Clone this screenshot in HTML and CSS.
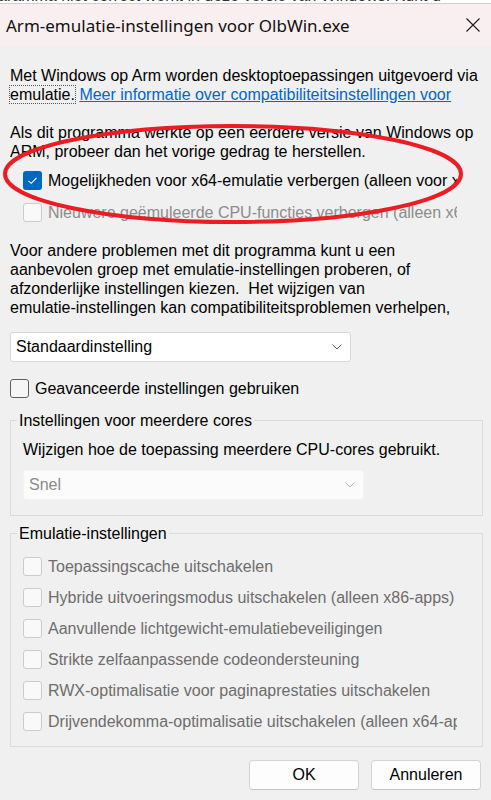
FILE: index.html
```html
<!DOCTYPE html>
<html lang="nl">
<head>
  <meta charset="UTF-8">
  <title>Arm-emulatie-instellingen voor OlbWin.exe</title>
  <link rel="stylesheet" href="styles.css">
</head>
<body>
  <div class="behind"><span>aramma niet correct werkt in deze versie van Windows. Kunt u</span></div>
  <div class="dialog">
    <div class="titlebar">
      <span class="title">Arm-emulatie-instellingen voor OlbWin.exe</span>
      <svg class="close" width="14" height="14" viewBox="0 0 14 14"><path d="M0.5 0.5 L13.5 13.5 M13.5 0.5 L0.5 13.5" stroke="#1b1b1b" stroke-width="1.1" fill="none"/></svg>
    </div>
    <div class="content">
      <p class="text intro">Met Windows op Arm worden desktoptoepassingen uitgevoerd via<br><span class="focus">emulatie.</span> <a href="#">Meer informatie over compatibiliteitsinstellingen voor</a></p>
      <p class="text">Als dit programma werkte op een eerdere versie van Windows op<br>ARM, probeer dan het vorige gedrag te herstellen.</p>
      <div class="compat">
        <div class="check">
          <span class="box checked"><svg width="19" height="19" viewBox="0 0 19 19"><path d="M5.5 9.8 L8.2 12.3 L13.5 7" stroke="#fff" stroke-width="1.1" fill="none"/></svg></span>
          <span class="label">Mogelijkheden voor x64-emulatie verbergen (alleen voor x64-apps)</span>
        </div>
        <div class="check disabled light">
          <span class="box"></span>
          <span class="label">Nieuwere geëmuleerde CPU-functies verbergen (alleen x64-apps)</span>
        </div>
      </div>
      <p class="text">Voor andere problemen met dit programma kunt u een<br>aanbevolen groep met emulatie-instellingen proberen, of<br>afzonderlijke instellingen kiezen.&nbsp; Het wijzigen van<br>emulatie-instellingen kan compatibiliteitsproblemen verhelpen,</p>
      <div class="select">
        <span>Standaardinstelling</span>
        <svg width="10" height="6" viewBox="0 0 10 6"><path d="M0.5 0.5 L5 5 L9.5 0.5" stroke="#5a5a5a" stroke-width="1" fill="none"/></svg>
      </div>
      <div class="check advanced">
        <span class="box"></span>
        <span class="label">Geavanceerde instellingen gebruiken</span>
      </div>
      <fieldset class="group cores">
        <legend>Instellingen voor meerdere cores</legend>
        <p class="text">Wijzigen hoe de toepassing meerdere CPU-cores gebruikt.</p>
        <div class="select disabled">
          <span>Snel</span>
          <svg width="10" height="6" viewBox="0 0 10 6"><path d="M0.5 0.5 L5 5 L9.5 0.5" stroke="#b5b5b5" stroke-width="1" fill="none"/></svg>
        </div>
      </fieldset>
      <fieldset class="group emulation">
        <legend>Emulatie-instellingen</legend>
        <div class="check disabled"><span class="box"></span><span class="label">Toepassingscache uitschakelen</span></div>
        <div class="check disabled"><span class="box"></span><span class="label">Hybride uitvoeringsmodus uitschakelen (alleen x86-apps)</span></div>
        <div class="check disabled"><span class="box"></span><span class="label">Aanvullende lichtgewicht-emulatiebeveiligingen</span></div>
        <div class="check disabled"><span class="box"></span><span class="label">Strikte zelfaanpassende codeondersteuning</span></div>
        <div class="check disabled"><span class="box"></span><span class="label">RWX-optimalisatie voor paginaprestaties uitschakelen</span></div>
        <div class="check disabled"><span class="box"></span><span class="label">Drijvendekomma-optimalisatie uitschakelen (alleen x64-apps)</span></div>
      </fieldset>
      <div class="buttons">
        <button>OK</button>
        <button>Annuleren</button>
      </div>
    </div>
  </div>
  <!-- red marker drawn over the screenshot -->
  <svg class="marker" width="491" height="130" viewBox="0 0 491 130">
    <ellipse cx="233" cy="52" rx="228" ry="48" fill="none" stroke="#ec1c24" stroke-width="4"/>
  </svg>
</body>
</html>
```

FILE: styles.css
```css
body { margin: 0; background: #f0f0f0; font-family: "Liberation Sans", Arial, sans-serif; font-size: 16px; color: #000; position: relative; width: 491px; height: 800px; overflow: hidden; }
.behind { height: 3px; overflow: hidden; background: #fff; border-bottom: 1px solid #cfcfcf; white-space: nowrap; }
.behind span { display: block; margin-top: -12px; margin-left: -2px; line-height: 16px; color: #333; }
.dialog { background: #f0f0f0; }
.titlebar { height: 42px; background: #f9eff1; display: flex; align-items: center; justify-content: space-between; padding: 0 11px 0 6px; }
.title { font-family: "Noto Sans", sans-serif; font-size: 17px; color: #111; }
.close { display: block; }
.content { padding: 20px 8px 12px 10px; }
.text { margin: 0 0 19px; line-height: 19px; white-space: nowrap; }
.focus { outline: 1px dotted #555; outline-offset: 0; }
a { color: #0066cc; }
.compat { margin: -16px 0 13px 13px; }
.check { display: flex; align-items: center; height: 32px; gap: 6px; }
.box { width: 17px; height: 17px; border: 1px solid #5f5f5f; border-radius: 3px; background: #f6f6f6; flex: none; }
.box.checked { width: 19px; height: 19px; border: none; background: #0067c0; }
.box svg { display: block; }
.label { max-width: 409px; overflow: hidden; white-space: nowrap; line-height: 19px; }
.check.disabled .box { border-color: #cbcbcb; background: #f9f9f9; }
.check.disabled .label { color: #6d6d6d; }
.check.light .label { color: #8c8c8c; }
.select { width: 326px; height: 28px; background: #fff; border: 1px solid #d6d6d6; border-radius: 3px; display: flex; align-items: center; justify-content: space-between; padding: 0 8px 0 5px; box-sizing: content-box; margin-top: -4px; }
.select svg { display: block; }
.select.disabled { background: #fbfbfb; border-color: #f4f4f4; color: #8a8a8a; margin-top: 0; }
.advanced { height: 31px; margin-top: 11px; }
.group { margin: 0; padding: 0 11px 15px 12px; border: 1px solid #dadada; min-width: 0; }
.group legend { margin-left: -6px; padding: 0 2px; line-height: 19px; }
.cores { margin-top: 7px; }
.cores .text { margin: 10px 0 11px; }
.emulation { margin-top: 8px; padding-bottom: 9px; }
.emulation .check { height: 31px; }
.emulation .check:first-of-type { margin-top: 8px; }
.buttons { display: flex; justify-content: flex-end; gap: 12px; margin: 13px 2px 0 0; }
.buttons button { width: 110px; height: 30px; background: #fdfdfd; border: 1px solid #d4d4d4; border-bottom-color: #c4c4c4; border-radius: 4px; font-family: "Liberation Sans", Arial, sans-serif; font-size: 16px; color: #000; }
.marker { position: absolute; left: 0; top: 122px; pointer-events: none; }
```
